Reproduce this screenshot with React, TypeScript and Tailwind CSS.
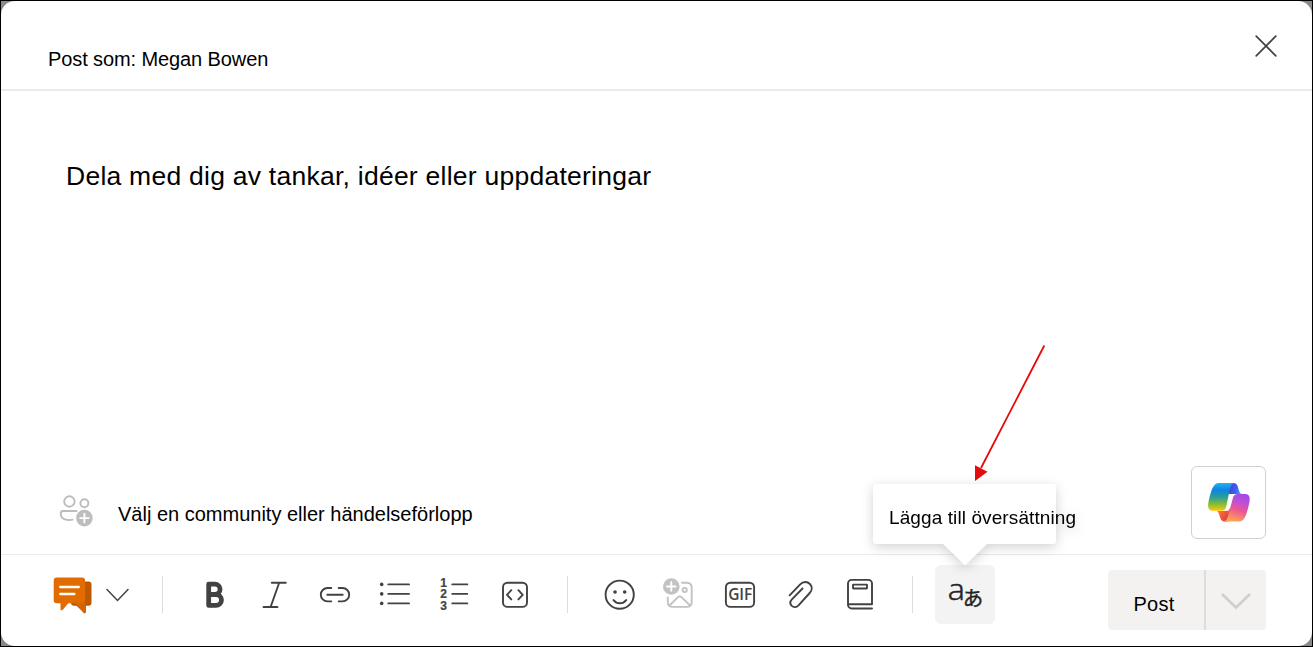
import type { ReactNode } from "react";

function ToolIcon({ children, label, active }: { children: ReactNode; label: string; active?: boolean }) {
  return (
    <button aria-label={label} className={active ? "h-[59px] w-[60px] rounded-md bg-[#f3f3f3]" : "h-[59px] w-[60px]"}>
      <svg width="60" height="59" viewBox="0 0 60 59" fill="none" stroke="#424242" strokeWidth="1.9" strokeLinecap="round" strokeLinejoin="round">
        {children}
      </svg>
    </button>
  );
}

function Separator() {
  return <div className="h-[37px] w-px bg-[#dedede]" />;
}

function PeopleIcon() {
  return (
    <svg width="36" height="34" viewBox="58 495 36 34" fill="none" stroke="#bdbdbd" strokeWidth="1.9" strokeLinecap="round">
      <circle cx="69.4" cy="501.5" r="5.2" />
      <circle cx="84.4" cy="503.2" r="4" />
      <path d="M76.5 511H63.2a2.5 2.5 0 0 0-2.5 2.5c0 4.200 3.400 6.600 8.700 6.600 1.200 0 2.200-.1 3.200-.4" />
      <circle cx="84.400" cy="518.100" r="8.300" fill="#bdbdbd" stroke="none" />
      <path d="M84.400 513.800v8.600M80.100 518.100h8.600" stroke="#fff" />
    </svg>
  );
}

function DiscussionIcon() {
  return (
    <svg width="40" height="38" viewBox="53 576 40 38">
      <path d="M71 581.500h17.500a3 3 0 0 1 3 3v18.200a3 3 0 0 1-3 3h-2.600v6.300c0 1-1.200 1.500-2 .8l-7.400-7.100H74a3 3 0 0 1-3-3z" fill="#bd5a00" />
      <path d="M76 603h9.500v9c0 1.300-1.300 1.600-2.100.7l-5.200-7z" fill="#d66500" />
      <path d="M56.700 577.500H82a3 3 0 0 1 3 3v19.800a3 3 0 0 1-3 3H68.300l-5.700 6.600c-.8.900-2.100.4-2.100-.7v-5.900h-3.800a3 3 0 0 1-3-3v-19.800a3 3 0 0 1 3-3z" fill="#e36c00" />
      <path d="M60.200 587h18.600M60.200 594h14.200" stroke="#fff" strokeWidth="2.300" strokeLinecap="round" />
    </svg>
  );
}

function CopilotIcon() {
  return (
    <svg width="42" height="39" viewBox="0 0 42 39">
      <defs>
        <linearGradient id="blue" x1="0" y1="0" x2="0" y2="1">
          <stop offset="0" stopColor="#25aff0" />
          <stop offset="0.25" stopColor="#0c84e4" />
          <stop offset="0.5" stopColor="#299d9c" />
          <stop offset="0.72" stopColor="#74b843" />
          <stop offset="1" stopColor="#ffcc00" />
        </linearGradient>
        <linearGradient id="fold" x1="0" y1="0" x2="1" y2="0.2">
          <stop offset="0.3" stopColor="#4549dc" />
          <stop offset="0.65" stopColor="#3d62ef" />
          <stop offset="1" stopColor="#35b9f5" />
        </linearGradient>
        <linearGradient id="pink" x1="0.7" y1="0" x2="0.4" y2="1">
          <stop offset="0" stopColor="#a348e8" />
          <stop offset="0.28" stopColor="#bd50d6" />
          <stop offset="0.58" stopColor="#ed5792" />
          <stop offset="1" stopColor="#ffa552" />
        </linearGradient>
        <linearGradient id="ember" x1="0" y1="0" x2="1" y2="0.7">
          <stop offset="0" stopColor="#ff9b46" />
          <stop offset="0.5" stopColor="#f26039" />
          <stop offset="1" stopColor="#d6384a" />
        </linearGradient>
      </defs>
      <path d="M22 0h3.600c2.200 0 3.500 1.200 4.200 3.500l1.400 4.500c.6 2 1.500 3 3.300 3H26c-3 0-4.500 1-5.300 3L19 12z" fill="url(#fold)" />
      <path d="M20 38.500h-3.500c-2.200 0-3.500-1.300-4.200-3.500l-1.500-4.400c-.6-1.900-1.400-2.900-3.300-2.900H15c3 0 4.500-1 5.300-3L23 26z" fill="url(#ember)" />
      <path d="M20.500 11h8L20.500 27.800h-9z" fill="#fff" />
      <path d="M26.300 0H10.800C6.500 0 4.400 4.500 2.700 10 1 15.500.1 20 .1 22.800c0 3.500 2 5 5.200 5h8.500c2.600 0 3.700-1.500 4.400-4.100L22 5.500c.8-3 1.700-5 4.300-5.500z" fill="url(#blue)" />
      <path d="M15.700 38.500h15.400c4.300 0 6.400-4.500 8-10 1.700-5.500 2.600-9.800 2.600-12.700 0-3.400-2-4.800-5.200-4.800h-6.800c-2.600 0-4 1.500-4.800 4.100L20 33c-.9 3-1.800 5-4.300 5.500z" fill="url(#pink)" />
    </svg>
  );
}

function Tooltip() {
  return (
    <div className="absolute top-[-81px] left-[-62px] h-[81px] w-[183px] drop-shadow-[0_3px_6px_rgba(0,0,0,0.18)]">
      <div className="flex h-[60px] items-center rounded-[3px] bg-white pt-[8px] pl-4 text-[19px] whitespace-nowrap text-black">
        <span className="tracking-[0.1px]">Lägga till översättning</span>
      </div>
      <svg className="ml-[70px] block" width="44" height="22" viewBox="0 0 44 22">
        <path d="M0 0h44L22 21.500z" fill="#fff" />
      </svg>
    </div>
  );
}

export default function App() {
  return (
    <div className="relative h-[647px] w-[1313px] overflow-hidden border border-black bg-[#8a8a8a] font-['Liberation_Sans',sans-serif] text-black">
      <div className="flex h-full flex-col rounded-[14px] bg-white">
        <header className="flex h-[90px] shrink-0 items-start justify-between border-b-2 border-[#ebebeb] pr-[35px] pl-[47px]">
          <h1 className="pt-[43px] text-[20px] leading-[30px] tracking-[-0.1px]">Post som: Megan Bowen</h1>
          <button aria-label="Stäng" className="mt-[34px]">
            <svg width="22" height="22" viewBox="0 0 22 22" stroke="#424242" strokeWidth="1.700" strokeLinecap="round">
              <path d="M1.200 1.200l19.600 19.600M20.800 1.200L1.200 20.800" />
            </svg>
          </button>
        </header>

        <main className="flex grow flex-col justify-between pl-[57px]">
          <p className="pt-[67px] pl-2 text-[26.500px] leading-[36px] tracking-[0.250px]">Dela med dig av tankar, idéer eller uppdateringar</p>
          <div className="flex items-end justify-between pr-[46px] pb-[15px]">
            <div className="flex items-center gap-6 pb-[10px]">
              <PeopleIcon />
              <span className="pt-[5px] text-[20px] leading-[30px]">Välj en community eller händelseförlopp</span>
            </div>
            <button aria-label="Copilot" className="flex h-[73px] w-[75px] items-center justify-center rounded-md border border-[#d1d1d1] bg-white">
              <CopilotIcon />
            </button>
          </div>
        </main>

        <footer className="flex h-[92px] shrink-0 items-start border-t border-[#ebebeb] pt-[10px] pr-[46px] pl-[52px]">
          <div className="flex h-[59px] items-center">
            <DiscussionIcon />
            <svg className="ml-3" width="26" height="16" viewBox="105 587 26 16" fill="none" stroke="#424242" strokeWidth="1.500" strokeLinecap="round">
              <path d="M107 589.500l10.500 11 10.500-11" />
            </svg>
            <div className="mr-[22px] ml-[31px]">
              <Separator />
            </div>

            <ToolIcon label="Fet">
              <path d="M23.700 19.200h6.200a5 5 0 0 1 0 10.300h-6.200zM23.700 29.500h7.300a5.400 5.400 0 0 1 0 10.900h-7.300z" strokeWidth="4.800" />
            </ToolIcon>
            <ToolIcon label="Kursiv">
              <path d="M26.800 17.700h14M18.500 42h14M34.200 17.700L25.600 42" />
            </ToolIcon>
            <ToolIcon label="Länk">
              <path d="M26.300 23h-3.800a6.700 6.700 0 0 0 0 13.400h3.800M33.700 23h3.800a6.700 6.700 0 0 1 0 13.400h-3.800M22.300 29.700h15.400" />
            </ToolIcon>
            <ToolIcon label="Punktlista">
              <path d="M23.300 19.400h20.700M23.300 28.900h20.700M23.300 38.400h20.700" />
              <g fill="#424242" stroke="none">
                <circle cx="16.700" cy="19.400" r="1.800" />
                <circle cx="16.700" cy="28.900" r="1.800" />
                <circle cx="16.700" cy="38.400" r="1.800" />
              </g>
            </ToolIcon>
            <ToolIcon label="Numrerad lista">
              <path d="M27.300 19.400h15M27.300 28.900h15M27.300 38.400h15" />
              <g fill="#424242" stroke="#424242" strokeWidth="0.200" fontSize="12" fontWeight="700" fontFamily="Liberation Sans, sans-serif">
                <text x="15.300" y="21.500">1</text>
                <text x="15.300" y="33">2</text>
                <text x="15.300" y="44.500">3</text>
              </g>
            </ToolIcon>
            <ToolIcon label="Kod">
              <rect x="18" y="17.700" width="24" height="24.200" rx="4.500" />
              <path d="M26.300 25.200l-4.300 4.600 4.300 4.600M33.400 25.200l4.300 4.600-4.300 4.600" />
            </ToolIcon>

            <div className="mx-[22px]">
              <Separator />
            </div>

            <ToolIcon label="Emoji">
              <circle cx="29.700" cy="29.700" r="14.100" />
              <path d="M23.500 35.100c3.300 4.200 9.400 4.200 12.700 0" />
              <circle cx="25" cy="27" r="1.800" fill="#424242" stroke="none" />
              <circle cx="34.700" cy="27" r="1.800" fill="#424242" stroke="none" />
            </ToolIcon>
            <ToolIcon label="Bild">
              <g stroke="#c2c2c2">
                <path d="M32 17.700h5.200a4.500 4.500 0 0 1 4.500 4.500v15.200a4.500 4.500 0 0 1-4.500 4.500H22.300a4.500 4.500 0 0 1-4.500-4.500v-5" />
                <path d="M19.500 40.500l8.500-8.400a2.400 2.400 0 0 1 3.400 0l8.700 8.400" />
                <circle cx="34.700" cy="25" r="2.100" />
              </g>
              <circle cx="21.300" cy="21.500" r="8.300" fill="#c2c2c2" stroke="none" />
              <path d="M21.300 17.200v8.600M17 21.500h8.600" stroke="#fff" />
            </ToolIcon>
            <ToolIcon label="GIF">
              <rect x="15.900" y="17.700" width="28.200" height="24.200" rx="4.500" />
              <text x="18.200" y="35.300" textLength="24" fill="#424242" stroke="none" fontSize="15.500" fontWeight="600" fontFamily="Open Sans, sans-serif">GIF</text>
            </ToolIcon>
            <ToolIcon label="Bifoga">
              <path d="M19.600 30.300l10.600-11c3-3.100 7.300-2.800 9.700-.3 2.400 2.500 2.400 6.200-.2 9L28.500 40.400c-2 2.100-4.900 2.200-6.700.5-1.800-1.800-1.800-4.500.1-6.500l10.600-10.900" />
            </ToolIcon>
            <ToolIcon label="Ämne">
              <path d="M42 43.500H21.700a3.700 3.700 0 0 1-3.700-3.700V18.600a3.700 3.700 0 0 1 3.700-3.700h16.600a3.700 3.700 0 0 1 3.700 3.700v20.700H18.100" />
              <rect x="23" y="19.600" width="14" height="3.900" rx="0.500" />
            </ToolIcon>

            <div className="mx-[22px]">
              <Separator />
            </div>

            <div className="relative h-[59px]">
              <ToolIcon label="Lägg till översättning" active>
                <g fill="#242424" stroke="#242424">
                  <text transform="translate(12.700 35) scale(1.060 0.960)" strokeWidth="0.550" fontSize="30.500" fontWeight="300" fontFamily="Open Sans, Noto Sans, sans-serif">a</text>
                  <text x="27.800" y="41" strokeWidth="0.400" fontSize="20.500" fontWeight="400" fontFamily="Noto Sans CJK JP, sans-serif">あ</text>
                </g>
              </ToolIcon>
              <Tooltip />
            </div>
          </div>

          <div className="mt-[5px] ml-auto flex h-[60px] overflow-hidden rounded bg-[#f3f2f1]">
            <button className="w-[96px] pt-[7px] pr-1 text-[20px] tracking-[0.3px]">Post</button>
            <div className="w-[2px] bg-[#dedddc]" />
            <button aria-label="Fler alternativ" className="flex w-[60px] items-center justify-center pt-[2px]">
              <svg width="32" height="18" viewBox="0 0 32 18" fill="none" stroke="#d0cfce" strokeWidth="2.700">
                <path d="M2 2l14 13.500L30 2" />
              </svg>
            </button>
          </div>
        </footer>
      </div>

      <svg className="absolute top-[343px] left-[970px]" width="80" height="140" viewBox="971 344 80 140">
        <path d="M1044.300 345.500L981 468" stroke="#e60b0b" strokeWidth="1.800" />
        <path d="M975 465.300l12.500 6.400-12.500 9.300z" fill="#e60b0b" />
      </svg>
    </div>
  );
}
